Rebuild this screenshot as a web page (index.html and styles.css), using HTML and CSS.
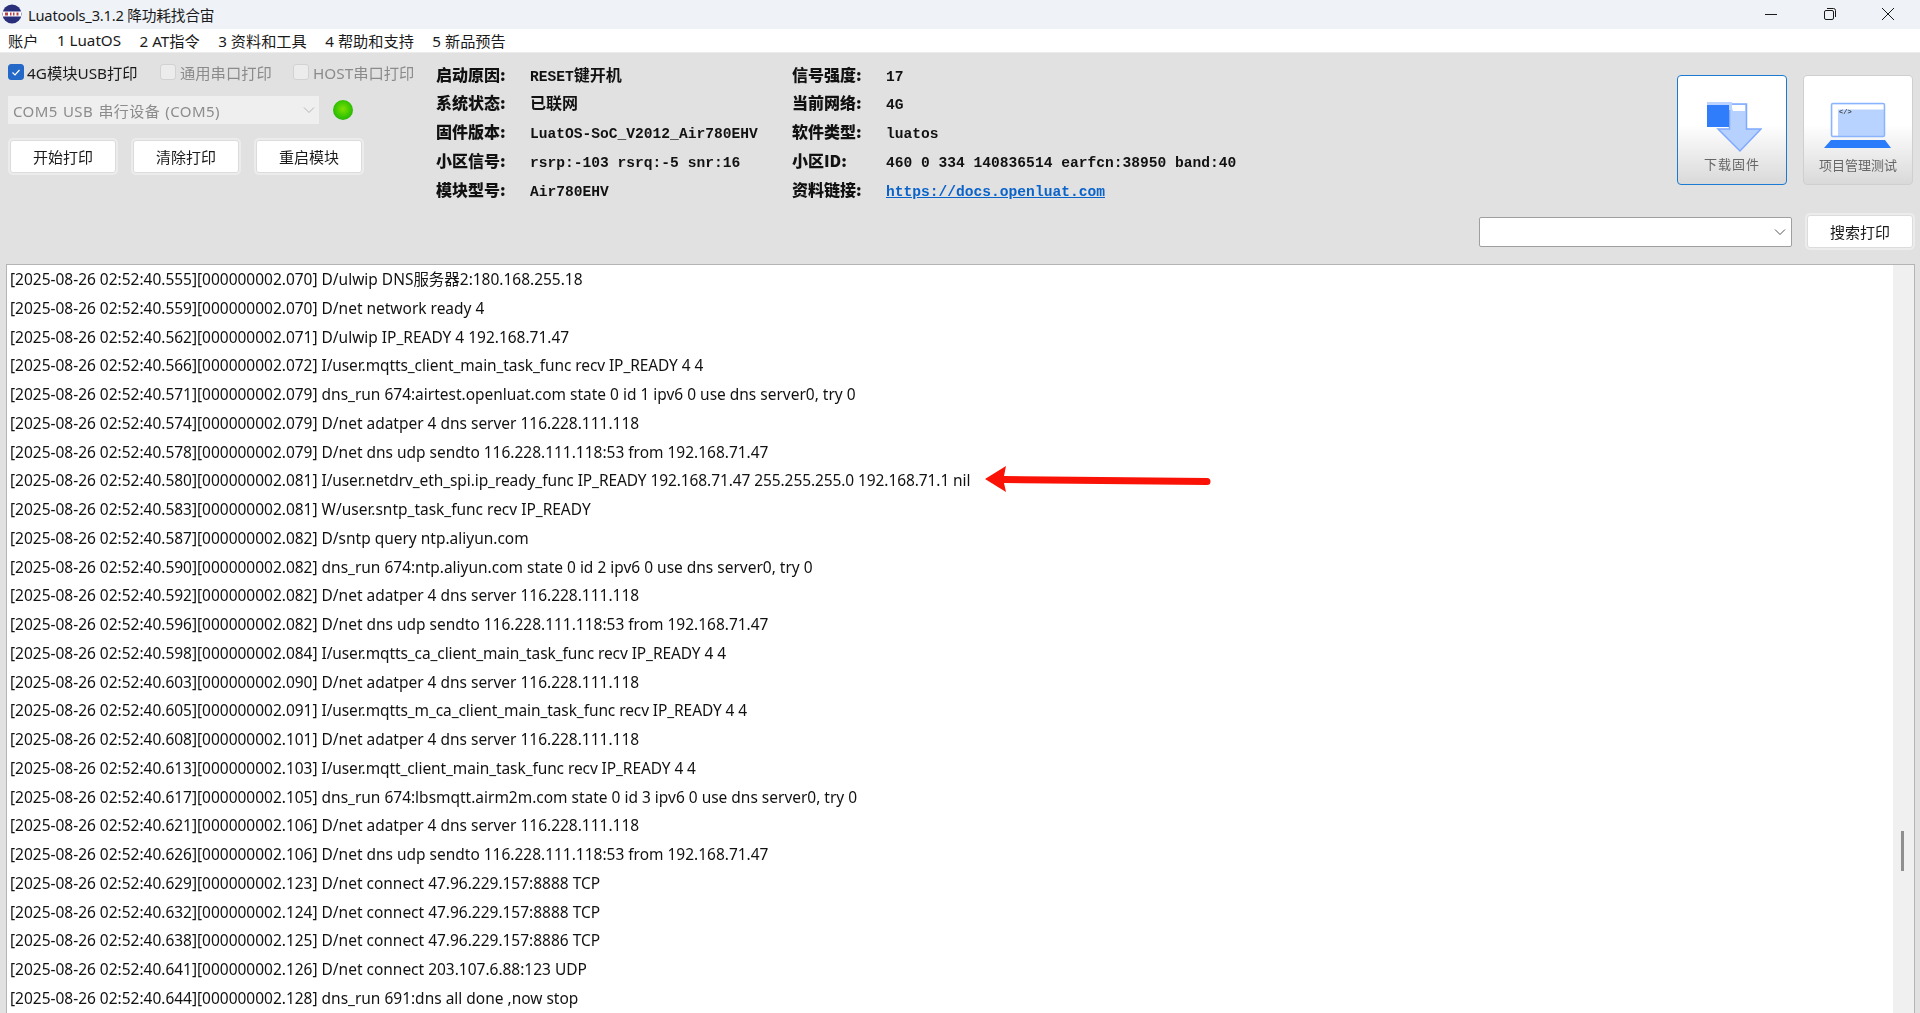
FILE: index.html
```html
<!DOCTYPE html>
<html lang="zh-CN">
<head>
<meta charset="utf-8">
<title>Luatools</title>
<link rel="stylesheet" href="styles.css">
</head>
<body>
<div class="app">
  <header class="titlebar">
    <svg class="logo" viewBox="0 0 20 20" width="20" height="20">
      <circle cx="10" cy="10" r="9.5" fill="#2a2f7c"/>
      <path d="M1 7.5h18v5H1z" fill="#fff"/>
      <path d="M3 8.5h3v3H3zM8 8.5h1.500v3H8zM11 8.500h1.500v3H11zM14.500 8.500h2v3h-2z" fill="#b8404c"/>
    </svg>
    <span class="title">Luatools_3.1.2 降功耗找合宙</span>
    <div class="winctl">
      <svg width="14" height="14" viewBox="0 0 14 14"><path d="M1 7.500h12" stroke="#1a1a1a" fill="none"/></svg>
      <svg width="14" height="14" viewBox="0 0 14 14"><rect x="1.500" y="3.500" width="9" height="9" rx="1.500" stroke="#1a1a1a" fill="none"/><path d="M4 1.500h6.500a2 2 0 0 1 2 2V10" stroke="#1a1a1a" fill="none"/></svg>
      <svg width="14" height="14" viewBox="0 0 14 14"><path d="M1 1l12 12M13 1L1 13" stroke="#1a1a1a" fill="none"/></svg>
    </div>
  </header>
  <nav class="menu">
    <span>账户</span><span>1 LuatOS</span><span>2 AT指令</span><span>3 资料和工具</span><span>4 帮助和支持</span><span>5 新品预告</span>
  </nav>
  <section class="toolbar">
    <div class="left">
      <div class="checks">
        <label class="check on"><i class="box"><svg viewBox="0 0 16 16" width="16" height="16"><path d="M4.500 8.500l2.500 2.500 4.500-5" stroke="#fff" stroke-width="1.200" fill="none"/></svg></i>4G模块USB打印</label>
        <label class="check off"><i class="box"></i>通用串口打印</label>
        <label class="check off"><i class="box"></i>HOST串口打印</label>
      </div>
      <div class="port">
        <div class="combo disabled"><span>COM5 USB 串行设备 (COM5)</span>
          <svg viewBox="0 0 12 8" width="12" height="8"><path d="M1 1.500l5 5 5-5" stroke="#b4b4b4" fill="none"/></svg>
        </div>
        <i class="led"></i>
      </div>
      <div class="actions">
        <button class="btn">开始打印</button>
        <button class="btn">清除打印</button>
        <button class="btn">重启模块</button>
      </div>
    </div>
    <div class="info">
      <b>启动原因:</b><span>RESET<span class="cjk">键开机</span></span><b>信号强度:</b><span>17</span>
      <b>系统状态:</b><span><span class="cjk">已联网</span></span><b>当前网络:</b><span>4G</span>
      <b>固件版本:</b><span>LuatOS-SoC_V2012_Air780EHV</span><b>软件类型:</b><span>luatos</span>
      <b>小区信号:</b><span>rsrp:-103 rsrq:-5 snr:16</span><b>小区ID:</b><span>460 0 334 140836514 earfcn:38950 band:40</span>
      <b>模块型号:</b><span>Air780EHV</span><b>资料链接:</b><span><a class="link" href="#">https://docs.openluat.com</a></span>
    </div>
    <div class="right">
      <div class="bigs">
        <button class="big active">
          <svg viewBox="0 0 60 54" width="60" height="54">
            <path d="M27.500 4h17v25h14.500l-21 22-22-22h11.500z" fill="#b7d1ff" stroke="#7fa9ff" stroke-width="1.500"/>
            <path d="M29 5h14v6H31z" fill="#fff"/>
            <rect x="5" y="2" width="25" height="8" fill="#bcd3ff"/>
            <rect x="5" y="5" width="22" height="22" fill="#2f7dfb"/>
          </svg>
          <span>下载固件</span>
        </button>
        <button class="big laptop">
          <svg viewBox="0 0 72 48" width="72" height="48">
            <rect x="9.500" y="1.500" width="53" height="33" rx="1.500" fill="#b8d3ff" stroke="#8ab4ff" stroke-width="1.500"/>
            <path d="M10.500 2.500h51v5H16v26h-5.500z" fill="#fff"/>
            <path d="M9 38h54l6 8H2z" fill="#2b7cfb"/>
            <text x="17" y="12" class="code">&lt;/&gt;</text>
          </svg>
          <span>项目管理测试</span>
        </button>
      </div>
      <div class="search">
        <div class="combo field"><svg viewBox="0 0 12 8" width="12" height="8"><path d="M1 1.500l5 5 5-5" stroke="#555" fill="none"/></svg></div>
        <button class="btn">搜索打印</button>
      </div>
    </div>
  </section>
  <main class="log">
    <div class="lines">
      <p><span class="ts">[2025-08-26 02:52:40.555][000000002.070]</span> D/ulwip DNS服务器2:180.168.255.18</p>
      <p><span class="ts">[2025-08-26 02:52:40.559][000000002.070]</span> D/net network ready 4</p>
      <p><span class="ts">[2025-08-26 02:52:40.562][000000002.071]</span> D/ulwip IP_READY 4 192.168.71.47</p>
      <p class="tight"><span class="ts">[2025-08-26 02:52:40.566][000000002.072]</span> I/user.mqtts_client_main_task_func recv IP_READY 4 4</p>
      <p><span class="ts">[2025-08-26 02:52:40.571][000000002.079]</span> dns_run 674:airtest.openluat.com state 0 id 1 ipv6 0 use dns server0, try 0</p>
      <p><span class="ts">[2025-08-26 02:52:40.574][000000002.079]</span> D/net adatper 4 dns server 116.228.111.118</p>
      <p><span class="ts">[2025-08-26 02:52:40.578][000000002.079]</span> D/net dns udp sendto 116.228.111.118:53 from 192.168.71.47</p>
      <p class="tight"><span class="ts">[2025-08-26 02:52:40.580][000000002.081]</span> I/user.netdrv_eth_spi.ip_ready_func IP_READY 192.168.71.47 255.255.255.0 192.168.71.1 nil</p>
      <p><span class="ts">[2025-08-26 02:52:40.583][000000002.081]</span> W/user.sntp_task_func recv IP_READY</p>
      <p><span class="ts">[2025-08-26 02:52:40.587][000000002.082]</span> D/sntp query ntp.aliyun.com</p>
      <p><span class="ts">[2025-08-26 02:52:40.590][000000002.082]</span> dns_run 674:ntp.aliyun.com state 0 id 2 ipv6 0 use dns server0, try 0</p>
      <p><span class="ts">[2025-08-26 02:52:40.592][000000002.082]</span> D/net adatper 4 dns server 116.228.111.118</p>
      <p><span class="ts">[2025-08-26 02:52:40.596][000000002.082]</span> D/net dns udp sendto 116.228.111.118:53 from 192.168.71.47</p>
      <p class="tight"><span class="ts">[2025-08-26 02:52:40.598][000000002.084]</span> I/user.mqtts_ca_client_main_task_func recv IP_READY 4 4</p>
      <p><span class="ts">[2025-08-26 02:52:40.603][000000002.090]</span> D/net adatper 4 dns server 116.228.111.118</p>
      <p class="tight"><span class="ts">[2025-08-26 02:52:40.605][000000002.091]</span> I/user.mqtts_m_ca_client_main_task_func recv IP_READY 4 4</p>
      <p><span class="ts">[2025-08-26 02:52:40.608][000000002.101]</span> D/net adatper 4 dns server 116.228.111.118</p>
      <p class="tight"><span class="ts">[2025-08-26 02:52:40.613][000000002.103]</span> I/user.mqtt_client_main_task_func recv IP_READY 4 4</p>
      <p><span class="ts">[2025-08-26 02:52:40.617][000000002.105]</span> dns_run 674:lbsmqtt.airm2m.com state 0 id 3 ipv6 0 use dns server0, try 0</p>
      <p><span class="ts">[2025-08-26 02:52:40.621][000000002.106]</span> D/net adatper 4 dns server 116.228.111.118</p>
      <p><span class="ts">[2025-08-26 02:52:40.626][000000002.106]</span> D/net dns udp sendto 116.228.111.118:53 from 192.168.71.47</p>
      <p><span class="ts">[2025-08-26 02:52:40.629][000000002.123]</span> D/net connect 47.96.229.157:8888 TCP</p>
      <p><span class="ts">[2025-08-26 02:52:40.632][000000002.124]</span> D/net connect 47.96.229.157:8888 TCP</p>
      <p><span class="ts">[2025-08-26 02:52:40.638][000000002.125]</span> D/net connect 47.96.229.157:8886 TCP</p>
      <p><span class="ts">[2025-08-26 02:52:40.641][000000002.126]</span> D/net connect 203.107.6.88:123 UDP</p>
      <p><span class="ts">[2025-08-26 02:52:40.644][000000002.128]</span> dns_run 691:dns all done ,now stop</p>
    </div>
    <div class="scroll"><i class="thumb"></i></div>
    <svg class="arrow" viewBox="0 0 226 28" width="226" height="28">
      <path d="M0 13L21 0 19 10 222 12a3.500 3.500 0 0 1 0 7L19 17 21 26z" fill="#fb1206"/>
    </svg>
  </main>
</div>
</body>
</html>
```
FILE: styles.css
```css
* { box-sizing: border-box; }
html, body { margin: 0; height: 100%; overflow: hidden; }
body { font-family: "Noto Sans", "Noto Sans CJK SC", sans-serif; color: #1a1a1a; background: #e1e1e1; }
button { font: inherit; color: inherit; cursor: default; }
.app { display: flex; flex-direction: column; height: 1013px; filter: blur(0.35px); }

.titlebar { height: 29px; flex: none; display: flex; align-items: center; padding: 0 25px 1px 2px; background: #eff3f8; }
.logo { flex: none; }
.title { margin-left: 6px; font-size: 14.7px; letter-spacing: -0.2px; }
.winctl { margin-left: auto; display: flex; gap: 44.5px; }
.winctl svg { display: block; }

.menu { height: 24px; flex: none; display: flex; align-items: center; gap: 18.5px; padding: 0 0 2px 8px; background: #fff; font-size: 15.2px; border-bottom: 1px solid #ececec; }

.toolbar { height: 211px; flex: none; display: flex; }
.left { width: 436px; flex: none; padding: 10px 0 0 8px; }
.checks { display: flex; height: 17px; align-items: center; font-size: 15.3px; }
.check { display: flex; align-items: center; gap: 3px; width: 152px; }
.check + .check { width: 133px; gap: 4px; }
.check.off { color: #8b8b8b; }
.box { width: 16px; height: 16px; border-radius: 3px; border: 1px solid #d2d2d2; background: #ececec; display: block; }
.on .box { background: #2468c8; border-color: #2468c8; }
.on .box svg { display: block; margin: -1px; }
.port { display: flex; align-items: center; margin-top: 16px; gap: 14px; }
.combo { display: flex; align-items: center; justify-content: space-between; }
.disabled { width: 311px; height: 28px; padding: 0 4px 0 5px; background: #efefef; color: #8c8c8c; font-size: 15px; letter-spacing: 0.4px; word-spacing: 1px; }
.led { width: 20px; height: 20px; border-radius: 50%; background: radial-gradient(circle at 50% 45%, #7fe000 0, #35c400 55%, #1f9a1f 100%); display: block; }
.actions { display: flex; gap: 17px; margin: 16px 0 0 2px; }
.btn { width: 106px; height: 33px; padding: 0; background: #fff; border: 1px solid #dcdcdc; border-radius: 3px; box-shadow: 0 0 0 2px #ececec; font-size: 15px; display: flex; align-items: center; justify-content: center; }

.info { display: grid; grid-template-columns: 94px 262px 94px auto; grid-auto-rows: 28.75px; align-items: baseline; align-content: start; padding-top: 6.5px; font-family: "Liberation Mono", "Noto Sans CJK SC", monospace; font-weight: 700; font-size: 14.6px; line-height: 28.75px; color: #111; }
.info b { font-family: "Noto Sans CJK SC", sans-serif; font-size: 16px; }
.cjk { font-family: "Noto Sans CJK SC", sans-serif; font-size: 16px; }
.link { color: #0a63c9; }

.right { margin-left: auto; padding: 22px 7px 0 0; display: flex; flex-direction: column; align-items: flex-end; }
.bigs { display: flex; gap: 16px; }
.big { width: 110px; height: 110px; padding: 24px 0 0; display: flex; flex-direction: column; align-items: center; justify-content: flex-start; border: 1px solid #cfcfcf; border-radius: 4px; background: linear-gradient(#fff 45%, #d9d9d9); font-size: 13px; color: #666; }
.big span { font-family: "Noto Sans CJK SC", sans-serif; }
.big.active { border-color: #1b7ad2; letter-spacing: 1px; }
.big svg { display: block; }
.laptop svg { margin-top: 2px; }
.laptop span { margin-top: 5px; }
.search { display: flex; align-items: flex-start; gap: 15px; margin-top: 32px; }
.search .btn { margin-top: -2px; }
.field { width: 313px; height: 30px; background: #fff; border: 1px solid #9f9f9f; border-radius: 2px; justify-content: flex-end; padding-right: 5px; }

.log { position: relative; flex: 1; min-height: 0; display: flex; margin: 0 5px 0 6px; background: #fff; border: 1px solid #b4b4b4; border-bottom: 0; overflow: hidden; }
.lines { flex: 1; min-width: 0; padding-left: 3px; font-size: 15.47px; line-height: 28.75px; color: #111; }
.lines p { margin: 0; white-space: nowrap; height: 28.75px; }
.lines .tight { letter-spacing: -0.08px; }
.tight .ts { letter-spacing: 0; }
.scroll { width: 21px; flex: none; background: #f0f0f0; padding-top: 566px; }
.thumb { display: block; width: 3px; height: 40px; margin-left: 8px; background: #8f8f8f; }
.arrow { position: absolute; left: 978px; top: 201px; }
.code { font: 700 7px "Liberation Mono", monospace; fill: #444; }
```
